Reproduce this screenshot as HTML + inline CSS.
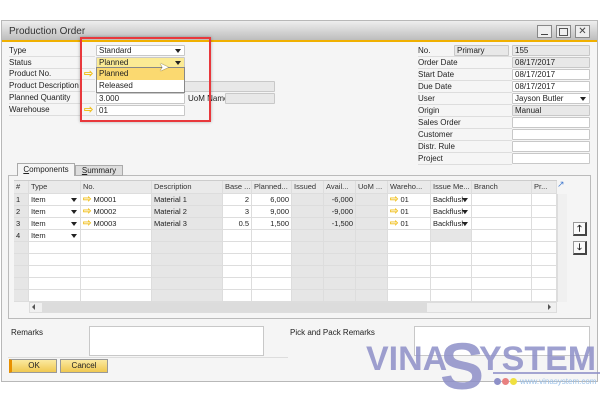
<!DOCTYPE html>
<html><head><meta charset="utf-8"><style>
*{box-sizing:border-box;margin:0;padding:0}
body{width:600px;height:400px;background:#fff;position:relative;overflow:hidden;font-family:"Liberation Sans",sans-serif;font-size:8px;color:#222}
.a{position:absolute}
.win{left:1px;top:20px;width:597px;height:362px;border:1px solid #b8b8b8;background:#f5f5f5}
.title{left:2px;top:21px;width:595px;height:19px;background:linear-gradient(#eeeeee,#bdbdbd);font-size:10px;padding:5px 7px;color:#333}
.orange{left:2px;top:40px;width:595px;height:2px;background:#f0b000}
.lbl{font-size:8px;line-height:11px;color:#222}
.lr{border-bottom:1px solid #ddd}
.in{border:1px solid #c8c8c8;background:#fff;height:11px;font-size:8px;line-height:9px;padding-left:2px;border-radius:1px}
.ro{background:#e8e8e8}
.arr{color:#f0c020;font-size:11px;line-height:9px;font-weight:bold}
.dd::after{content:"";position:absolute;right:3px;top:3px;border-left:3px solid transparent;border-right:3px solid transparent;border-top:4px solid #222}
.g{left:14px;top:180px;width:543px;height:122px;border:1px solid #ccc;background:#fff}
.cell{position:absolute;border-right:1px solid #ddd;border-bottom:1px solid #ddd;font-size:7.5px;line-height:11px;padding:0 2px;white-space:nowrap;overflow:hidden}
.btn{height:14px;border:1px solid #999;background:linear-gradient(#fbe9a0,#f0c850);font-size:8px;text-align:center;line-height:12px}
.wm{font-weight:bold;color:#8e90c8;opacity:.85;line-height:40px}
</style></head><body>
<div class="a win"></div>
<div class="a title">Production Order</div>
<div class="a" style="left:537px;top:25px;width:15px;height:13px;border:1px solid #888;background:#eee"></div>
<div class="a" style="left:541px;top:34px;width:7px;height:1px;background:#444"></div>
<div class="a" style="left:556px;top:25px;width:15px;height:13px;border:1px solid #888;background:#eee"></div>
<div class="a" style="left:559px;top:28px;width:9px;height:8px;border:1px solid #555"></div>
<div class="a" style="left:575px;top:25px;width:15px;height:13px;border:1px solid #888;background:#eee;font-size:10px;line-height:11px;text-align:center;color:#444">✕</div>
<div class="a orange"></div>

<div class="a lbl lr" style="left:9px;top:45px;width:86px">Type</div>
<div class="a lbl lr" style="left:9px;top:57px;width:86px">Status</div>
<div class="a lbl lr" style="left:9px;top:68px;width:86px">Product No.</div>
<div class="a lbl lr" style="left:9px;top:80px;width:86px">Product Description</div>
<div class="a lbl lr" style="left:9px;top:92px;width:86px">Planned Quantity</div>
<div class="a lbl lr" style="left:9px;top:104px;width:86px">Warehouse</div>
<div class="a in dd" style="left:96px;top:45px;width:89px">Standard</div>
<div class="a in dd" style="left:96px;top:57px;width:89px;background:#fbeb95">Planned</div>
<div class="a arr" style="left:84px;top:70px">⇨</div>
<div class="a in ro" style="left:96px;top:81px;width:179px"></div>
<div class="a in" style="left:96px;top:93px;width:89px">3.000</div>
<div class="a lbl" style="left:188px;top:93px">UoM Name</div>
<div class="a in ro" style="left:225px;top:93px;width:50px"></div>
<div class="a arr" style="left:84px;top:106px">⇨</div>
<div class="a in" style="left:96px;top:105px;width:89px">01</div>
<div class="a" style="left:96px;top:67px;width:89px;height:26px;border:1px solid #888;background:#fff;font-size:8px">
<div style="background:#fbd970;height:12px;line-height:12px;padding-left:2px">Planned</div>
<div style="height:12px;line-height:12px;padding-left:2px">Released</div></div>
<div class="a" style="left:159px;top:60px;font-size:12px;color:#fff;text-shadow:0 0 1px #000">➤</div>
<div class="a" style="left:80px;top:37px;width:131px;height:85px;border:2px solid #e8383c;box-shadow:0 0 3px rgba(0,0,0,.3)"></div>

<div class="a lbl lr" style="left:418px;top:45px;width:94px">No.</div>
<div class="a in ro" style="left:454px;top:45px;width:55px">Primary</div>
<div class="a in ro" style="left:512px;top:45px;width:78px">155</div>
<div class="a lbl lr" style="left:418px;top:57px;width:94px">Order Date</div><div class="a in ro" style="left:512px;top:57px;width:78px">08/17/2017</div>
<div class="a lbl lr" style="left:418px;top:69px;width:94px">Start Date</div><div class="a in" style="left:512px;top:69px;width:78px">08/17/2017</div>
<div class="a lbl lr" style="left:418px;top:81px;width:94px">Due Date</div><div class="a in" style="left:512px;top:81px;width:78px">08/17/2017</div>
<div class="a lbl lr" style="left:418px;top:93px;width:94px">User</div><div class="a in dd" style="left:512px;top:93px;width:78px">Jayson Butler</div>
<div class="a lbl lr" style="left:418px;top:105px;width:94px">Origin</div><div class="a in ro" style="left:512px;top:105px;width:78px">Manual</div>
<div class="a lbl lr" style="left:418px;top:117px;width:94px">Sales Order</div><div class="a in" style="left:512px;top:117px;width:78px"></div>
<div class="a lbl lr" style="left:418px;top:129px;width:94px">Customer</div><div class="a in" style="left:512px;top:129px;width:78px"></div>
<div class="a lbl lr" style="left:418px;top:141px;width:94px">Distr. Rule</div><div class="a in" style="left:512px;top:141px;width:78px"></div>
<div class="a lbl lr" style="left:418px;top:153px;width:94px">Project</div><div class="a in" style="left:512px;top:153px;width:78px"></div>

<div class="a" style="left:8px;top:175px;width:583px;height:144px;border:1px solid #bbb;background:#f5f5f5"></div>
<div class="a" style="left:17px;top:163px;width:58px;height:13px;border:1px solid #aaa;border-bottom:none;background:#f5f5f5;font-size:8px;text-align:center;line-height:12px"><u>C</u>omponents</div>
<div class="a" style="left:75px;top:165px;width:48px;height:11px;border:1px solid #aaa;background:#ddd;font-size:8px;text-align:center;line-height:10px"><u>S</u>ummary</div>

<div class="a g"></div>
<div id="grid"></div>
<script>
var cols=[[14,15,"#"],[29,52,"Type"],[81,71,"No."],[152,71,"Description"],[223,29,"Base ..."],[252,40,"Planned..."],[292,32,"Issued"],[324,32,"Avail..."],[356,32,"UoM ..."],[388,43,"Wareho..."],[431,41,"Issue Me..."],[472,60,"Branch"],[532,25,"Pr..."]];
var gray=[0,3,6,7,8];
var rows=[["1","Item","M0001","Material 1","2","6,000","","-6,000","","01","Backflush"],["2","Item","M0002","Material 2","3","9,000","","-9,000","","01","Backflush"],["3","Item","M0003","Material 3","0.5","1,500","","-1,500","","01","Backflush"],["4","Item"]];
var h="";
cols.forEach(function(c){h+='<div class="cell" style="left:'+c[0]+'px;top:181px;width:'+c[1]+'px;height:13px;background:#eaeaea;line-height:12px;color:#333">'+c[2]+'</div>';});
for(var r=0;r<9;r++){var y=194+r*12;var d=rows[r]||[];
cols.forEach(function(c,i){var bg=gray.indexOf(i)>=0?"#e6e6e6":"#fff";if(i==10&&r==3)bg="#e6e6e6";var t=d[i]||"";var al=(i==4||i==5||i==7)?"text-align:right;":"";
var pre="";if((i==2||i==9)&&t)pre='<span style="color:#f0c020;font-weight:bold;font-size:10px">⇨</span> ';
var dd=((i==1&&d[1])||(i==10&&t))?'<span style="position:absolute;right:3px;top:4px;border-left:3px solid transparent;border-right:3px solid transparent;border-top:4px solid #222"></span>':"";
h+='<div class="cell" style="left:'+c[0]+'px;top:'+y+'px;width:'+c[1]+'px;height:12px;background:'+bg+';'+al+'">'+pre+t+dd+'</div>';});}
document.getElementById("grid").innerHTML=h;
</script>
<div class="a" style="left:557px;top:194px;width:10px;height:108px;background:#f0f0f0;border-left:1px solid #ddd"></div>
<div class="a" style="left:557px;top:179px;font-size:9px;color:#4a7fd0">↗</div>
<div class="a" style="left:29px;top:302px;width:528px;height:11px;background:#f0f0f0;border:1px solid #ddd"></div>
<div class="a" style="left:42px;top:303px;width:385px;height:9px;background:#dcdcdc"></div>
<div class="a" style="left:32px;top:304px;border-top:3px solid transparent;border-bottom:3px solid transparent;border-right:3px solid #555"></div>
<div class="a" style="left:548px;top:304px;border-top:3px solid transparent;border-bottom:3px solid transparent;border-left:3px solid #555"></div>
<div class="a" style="left:573px;top:222px;width:14px;height:14px;border:1px solid #999;border-right:2px solid #444;border-bottom:2px solid #444;background:#fafafa;font-size:9px;text-align:center;line-height:11px;font-weight:bold">🡑</div>
<div class="a" style="left:573px;top:241px;width:14px;height:14px;border:1px solid #999;border-right:2px solid #444;border-bottom:2px solid #444;background:#fafafa;font-size:9px;text-align:center;line-height:11px;font-weight:bold">🡓</div>

<div class="a lbl" style="left:11px;top:327px">Remarks</div>
<div class="a" style="left:89px;top:326px;width:175px;height:30px;border:1px solid #c8c8c8;background:#fff"></div>
<div class="a lbl" style="left:290px;top:327px">Pick and Pack Remarks</div>
<div class="a" style="left:414px;top:326px;width:176px;height:30px;border:1px solid #c8c8c8;background:#fff"></div>
<div class="a" style="left:8px;top:357px;width:280px;height:1px;background:#ddd"></div>
<div class="a btn" style="left:9px;top:359px;width:48px;border-left:3px solid #e89000">OK</div>
<div class="a btn" style="left:60px;top:359px;width:48px">Cancel</div>

<div class="a wm" style="left:366px;top:339px;font-size:34px">VINA</div>
<div class="a wm" style="left:440px;top:331px;font-size:66px;line-height:70px">S</div>
<div class="a wm" style="left:479px;top:339px;font-size:34px">YSTEM</div>
<div class="a" style="left:493px;top:372px;width:107px;height:2px;background:#8e90c8;opacity:.8"></div>
<div class="a" style="left:494px;top:378px;width:7px;height:7px;border-radius:50%;background:#8e90c8"></div>
<div class="a" style="left:502px;top:378px;width:7px;height:7px;border-radius:50%;background:#e88080"></div>
<div class="a" style="left:510px;top:378px;width:7px;height:7px;border-radius:50%;background:#f0e040"></div>
<div class="a" style="left:520px;top:377px;font-size:8px;color:#9ac0e8">www.vinasystem.com</div>
</body></html>
